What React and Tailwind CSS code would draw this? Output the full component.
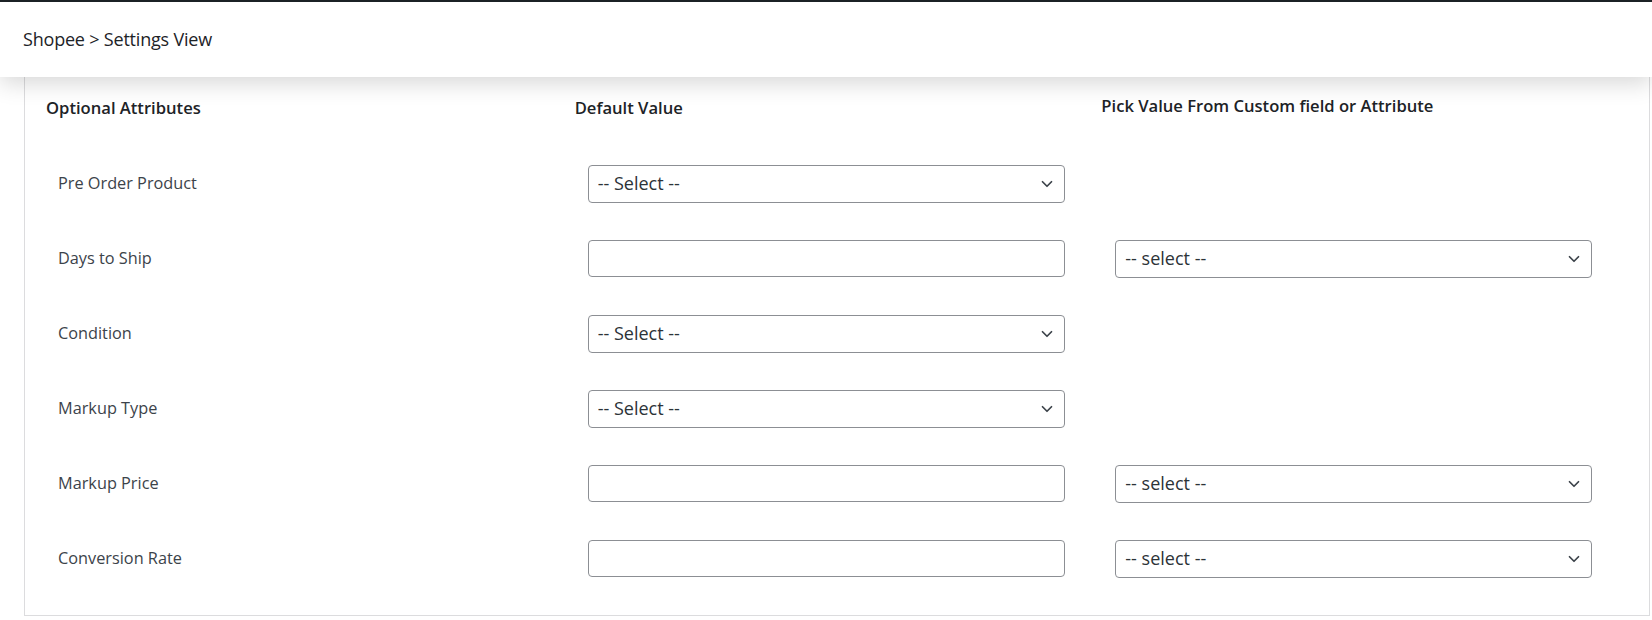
import { ChevronDown } from 'lucide-react'

const rows = [
  { label: 'Pre Order Product', type: 'select', pick: false },
  { label: 'Days to Ship', type: 'input', pick: true },
  { label: 'Condition', type: 'select', pick: false },
  { label: 'Markup Type', type: 'select', pick: false },
  { label: 'Markup Price', type: 'input', pick: true },
  { label: 'Conversion Rate', type: 'input', pick: true },
]

const SelectBox = ({ text }) => (
  <div className="relative w-[477px]">
    <select
      defaultValue=""
      className="w-full h-[38px] appearance-none rounded-[4px] border border-[#8c8f94] bg-white pl-[9px] pr-8 text-[18px] text-[#2c3338] outline-none"
    >
      <option value="">{text}</option>
    </select>
    <ChevronDown
      className="pointer-events-none absolute right-[9px] top-1/2 h-[18px] w-[18px] -translate-y-1/2 text-[#3c434a]"
      strokeWidth={2.3}
    />
  </div>
)

const TextBox = () => (
  <input
    type="text"
    className="w-[477px] h-[37px] rounded-[4px] border border-[#8c8f94] bg-white px-2 text-[16px] text-[#2c3338] outline-none"
  />
)

export default function App() {
  return (
    <div className="min-h-[620px] bg-white font-['Open_Sans',sans-serif] border-t-2 border-[#1d2327]">
      {/* Top header */}
      <div className="relative z-10 h-[75px] bg-white flex items-center pl-[23px] shadow-[0_6px_22px_rgba(0,0,0,0.16)]">
        <span className="text-[18px] text-[#1d2327] tracking-[-0.2px]">Shopee &gt; Settings View</span>
      </div>

      {/* Settings card */}
      <div className="ml-[24px] mr-[2px] border-x border-b border-[#dcdcde] bg-white pl-[21px] pr-[20px] pb-[19px]">
        <div className="grid grid-cols-3 h-[69px] pt-[20px] text-[16.6px] font-semibold text-[#1d2327]">
          <div className="leading-[22px]">Optional Attributes</div>
          <div className="leading-[22px] pl-[1px]">Default Value</div>
          <div className="leading-[22px] -mt-[2px]">Pick Value From Custom field or Attribute</div>
        </div>

        {rows.map((row) => (
          <div key={row.label} className="grid grid-cols-3 h-[75px] items-center">
            <div className="pl-[12px] text-[16.3px] text-[#3c434a]">{row.label}</div>
            <div className="pl-[14px]">
              {row.type === 'select' ? <SelectBox text="-- Select --" /> : <TextBox />}
            </div>
            <div className="pl-[14px]">
              {row.pick && <SelectBox text="-- select --" />}
            </div>
          </div>
        ))}
      </div>
    </div>
  )
}
